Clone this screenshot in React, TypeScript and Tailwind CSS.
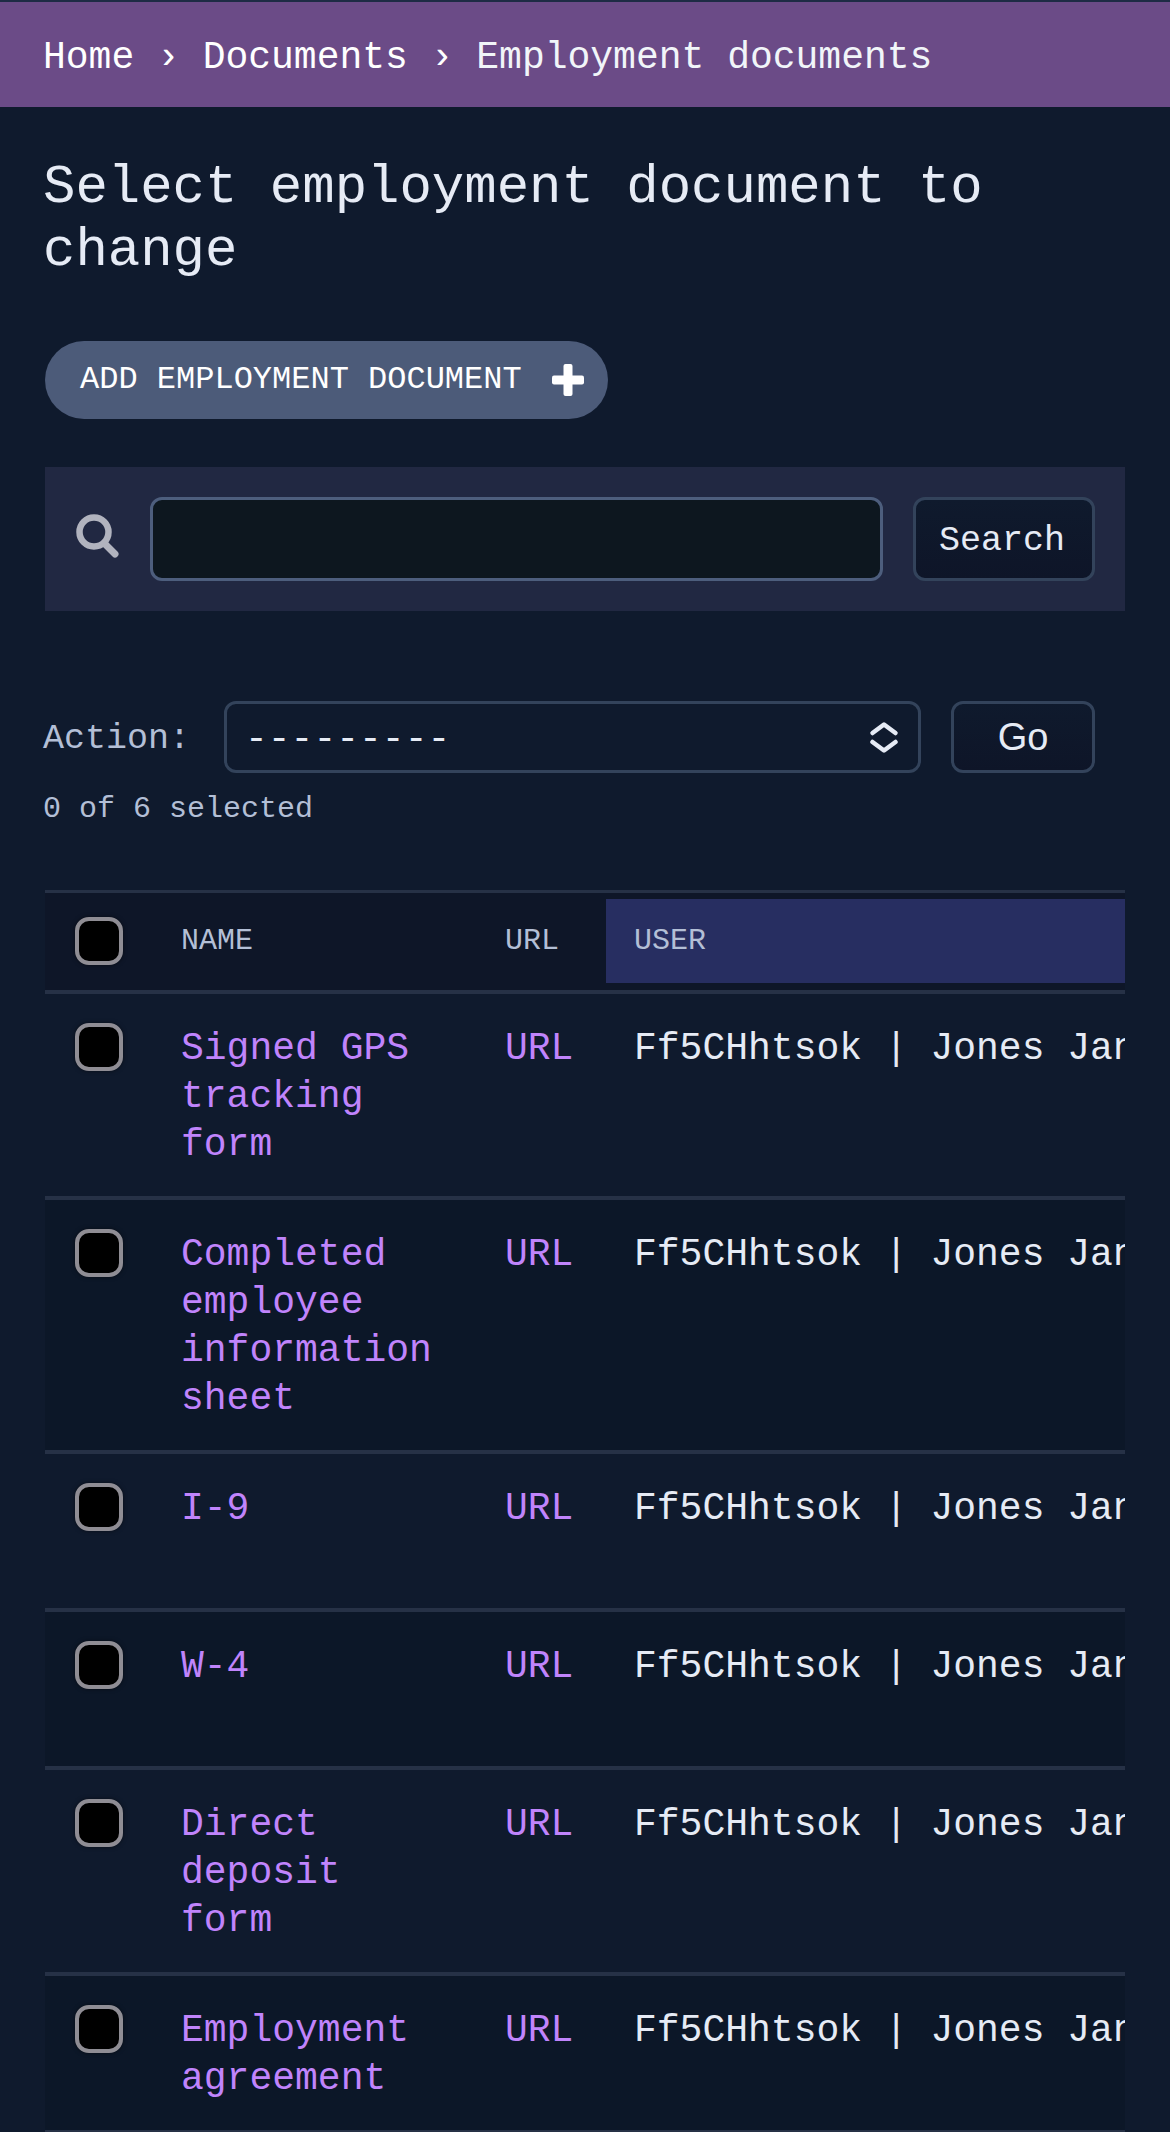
import React from 'react';

interface EmploymentDocument {
  id: number;
  name: string;
  user: string;
}

const documents: EmploymentDocument[] = [
  { id: 1, name: 'Signed GPS tracking form', user: 'Ff5CHhtsok | Jones Jan' },
  { id: 2, name: 'Completed employee information sheet', user: 'Ff5CHhtsok | Jones Jan' },
  { id: 3, name: 'I-9', user: 'Ff5CHhtsok | Jones Jan' },
  { id: 4, name: 'W-4', user: 'Ff5CHhtsok | Jones Jan' },
  { id: 5, name: 'Direct deposit form', user: 'Ff5CHhtsok | Jones Jan' },
  { id: 6, name: 'Employment agreement', user: 'Ff5CHhtsok | Jones Jan' },
];

function Breadcrumbs() {
  return (
    <nav
      aria-label="Breadcrumbs"
      className="border-t-2 border-[#1e2b45] bg-[#6b4b87] px-[43px] pt-8 pb-[25px] text-[38px] leading-[48px] whitespace-pre text-white"
    >
      <a href="#home">Home</a>
      {' › '}
      <a href="#documents">Documents</a>
      {' › '}
      <span className="text-[#f1f5f9]">Employment documents</span>
    </nav>
  );
}

function SearchIcon() {
  return (
    <svg width="44" height="44" viewBox="0 0 44 44" fill="none" stroke="#b1b3be" aria-hidden="true">
      <circle cx="19" cy="18" r="14.5" strokeWidth="6.5" />
      <path d="M30 30 40 40" strokeWidth="7" strokeLinecap="round" />
    </svg>
  );
}

function PlusIcon() {
  return (
    <svg width="32" height="32" viewBox="0 0 32 32" fill="#ffffff" aria-hidden="true">
      <rect x="11.5" y="0" width="9" height="32" rx="2" />
      <rect x="0" y="11.5" width="32" height="9" rx="2" />
    </svg>
  );
}

function Checkbox({ label }: { label: string }) {
  return (
    <input
      type="checkbox"
      aria-label={label}
      className="block size-12 appearance-none rounded-[14px] border-4 border-[#8f8d94] bg-black shadow-[0_0_4px_rgba(0,0,0,0.5)]"
    />
  );
}

function SearchBar() {
  return (
    <form className="mt-12 flex items-center bg-[#212842] p-[30px]">
      <label htmlFor="searchbar" aria-label="Search documents" className="mr-[31px] -mt-1.5">
        <SearchIcon />
      </label>
      <input
        id="searchbar"
        type="text"
        className="mr-[30px] h-[84px] min-w-0 flex-1 rounded-xl border-[3px] border-[#4d5e7d] bg-[#0d171f] px-4 text-[38px] text-[#e6ebf5]"
      />
      <button
        type="button"
        className="h-[84px] w-[182px] rounded-xl border-[3px] border-[#33435b] bg-linear-to-b from-[#0f1a2d] to-[#0e1528] pt-1 pr-1 text-[35px] text-[#e6ebf5]"
      >
        Search
      </button>
    </form>
  );
}

function ActionBar() {
  return (
    <div className="mt-[90px] pr-[30px] text-[#b3bfd6]">
      <div className="flex items-center gap-[30px]">
        <label htmlFor="action" className="-ml-0.5 w-[151px] pt-1 text-[35px]">
          Action:
        </label>
        <div className="relative flex-1">
          <select
            id="action"
            className="block h-[72px] w-full appearance-none rounded-xl border-[3px] border-[#33435b] bg-[#0f1a2d] px-[18px] pt-1 text-[38px] text-[#e6ebf5]"
          >
            <option>---------</option>
            <option>Delete selected employment documents</option>
          </select>
          <svg
            className="pointer-events-none absolute top-[20px] right-[22px]"
            width="30"
            height="32"
            viewBox="0 0 30 32"
            fill="none"
            stroke="#e6ebf5"
            strokeWidth="4.5"
            strokeLinecap="round"
            strokeLinejoin="round"
            aria-hidden="true"
          >
            <path d="M3.5 12 15 3.5 26.5 12" />
            <path d="M3.5 21 15 29.5 26.5 21" />
          </svg>
        </div>
        <button
          type="button"
          className="h-[72px] w-[144px] rounded-xl border-[3px] border-[#33435b] bg-linear-to-b from-[#0f1a2d] to-[#0e1528] font-['Liberation_Sans',Arial,sans-serif] text-[38px] text-[#e6ebf5]"
        >
          Go
        </button>
      </div>
      <p className="mt-3 -ml-0.5 text-[30px] leading-[48px]">0 of 6 selected</p>
    </div>
  );
}

function ResultsTable() {
  return (
    <table className="mt-[57px] w-full table-fixed border-collapse text-left">
      <thead>
        <tr className="h-[100px] border-t-[3px] border-b-4 border-[#263146] bg-[#0e1628] text-[30px] text-[#b3bfd6]">
          <th className="w-[108px] p-0 pl-[30px]">
            <Checkbox label="Select all documents" />
          </th>
          <th className="w-[324px] px-7 font-normal">NAME</th>
          <th className="w-[129px] px-7 font-normal">URL</th>
          <th className="p-0 font-normal">
            <div className="bg-[#272e61] px-7 leading-[84px]">USER</div>
          </th>
        </tr>
      </thead>
      <tbody className="align-top text-[38px] leading-[48px]">
        {documents.map((doc) => (
          <tr key={doc.id} className="h-[158px] border-b-4 border-[#263146] even:bg-[#0c1728]">
            <td className="pt-[29px] pl-[30px]">
              <Checkbox label={`Select ${doc.name}`} />
            </td>
            <th scope="row" className="px-7 pt-[31px] pb-[27px] font-normal">
              <a href={`#document-${doc.id}`} className="text-[#c084fc]">
                {doc.name}
              </a>
            </th>
            <td className="pt-[31px] pl-7">
              <a href={`#url-${doc.id}`} className="text-[#c084fc]">
                URL
              </a>
            </td>
            <td className="overflow-hidden pt-[31px] pl-7 whitespace-nowrap text-[#e6ebf5]">{doc.user}</td>
          </tr>
        ))}
      </tbody>
    </table>
  );
}

export default function App() {
  return (
    <div className="min-h-screen bg-[#0f1a2d] font-['Liberation_Mono','Courier_New',monospace]">
      <Breadcrumbs />
      <main className="px-[45px] pt-[49px]">
        <h1 className="-ml-0.5 text-[54px] leading-[63px] text-[#e6ebf5]">Select employment document to change</h1>
        <a
          href="#add"
          className="mt-[59px] inline-flex h-[78px] items-center gap-[30px] rounded-full bg-[#4c5b79] pr-6 pl-[35px] text-[32px] text-white"
        >
          ADD EMPLOYMENT DOCUMENT
          <PlusIcon />
        </a>
        <SearchBar />
        <ActionBar />
        <ResultsTable />
      </main>
    </div>
  );
}
